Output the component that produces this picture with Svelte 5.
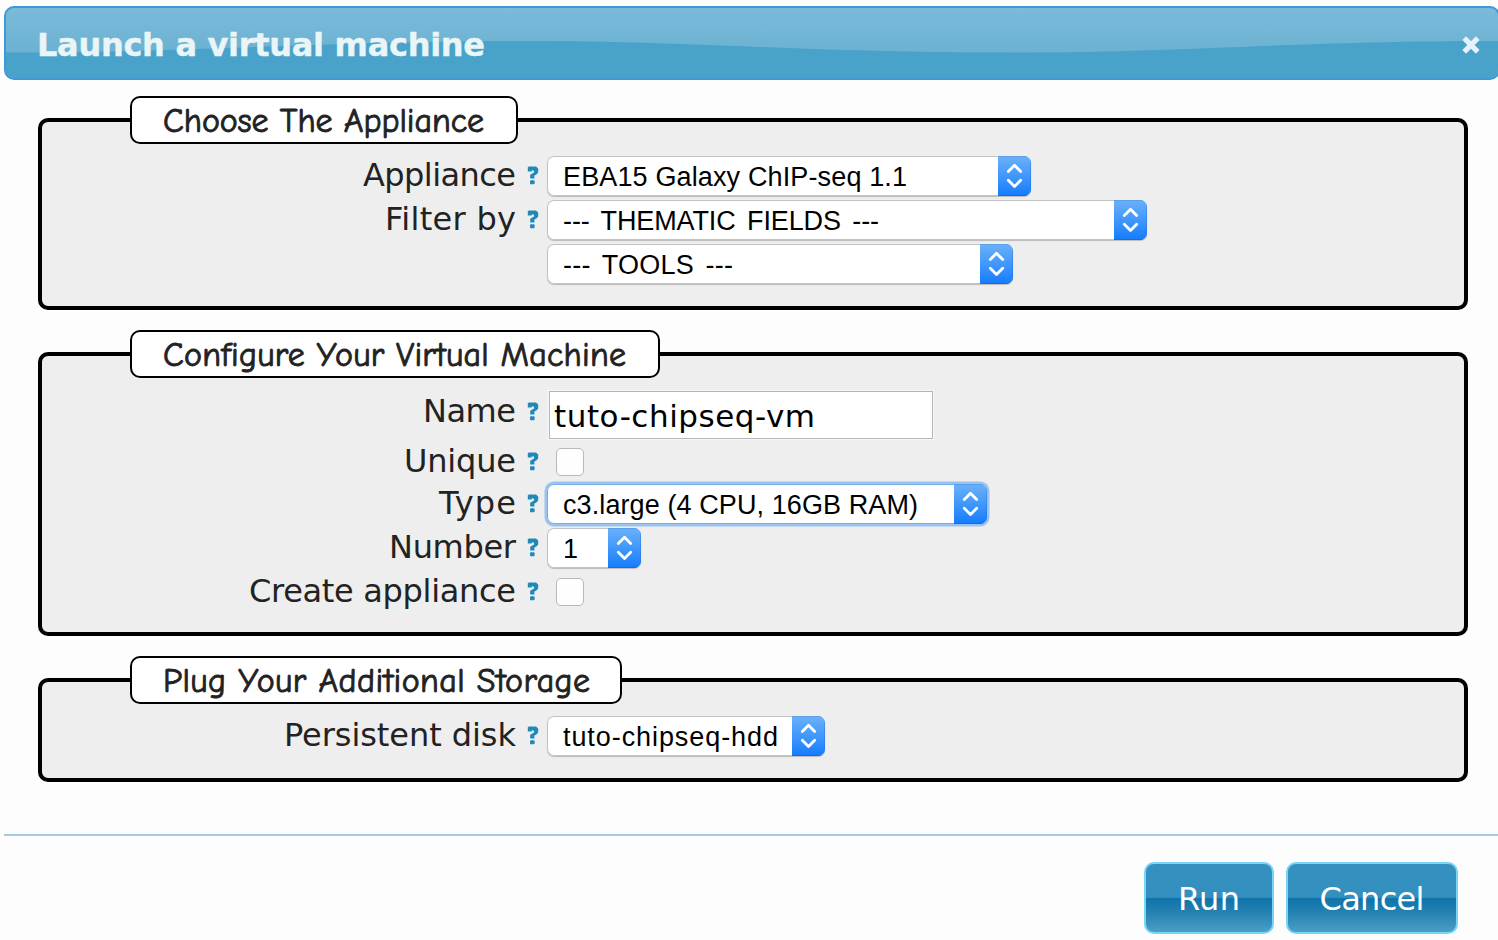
<script>
  // Spreads the letters of a node so that the text takes the given width.
  function fit(node, width) {
    const count = node.textContent.length;
    const natural = node.getBoundingClientRect().width;
    const gap = (width - natural) / (count - 1);
    node.style.letterSpacing = gap + 'px';
    node.style.marginRight = -gap + 'px';
  }

  const groups = [
    {
      title: 'Choose The Appliance', titleWidth: 321, width: 388, height: 192,
      rows: [
        { label: 'Appliance', labelWidth: 153, kind: 'select', value: 'EBA15 Galaxy ChIP-seq 1.1', textWidth: 344, width: 484 },
        { label: 'Filter by', labelWidth: 131, kind: 'select', value: '--- THEMATIC FIELDS ---', textWidth: 316, width: 600, placeholder: true },
        { kind: 'select', value: '--- TOOLS ---', textWidth: 170, width: 466, placeholder: true }
      ]
    },
    {
      title: 'Configure Your Virtual Machine', titleWidth: 463, width: 530, height: 284,
      rows: [
        { label: 'Name', labelWidth: 93, kind: 'input', value: 'tuto-chipseq-vm', textWidth: 261, tall: 50 },
        { label: 'Unique', labelWidth: 112, kind: 'check', tall: 42 },
        { label: 'Type', labelWidth: 77, kind: 'select', value: 'c3.large (4 CPU, 16GB RAM)', textWidth: 355, width: 440, focus: true },
        { label: 'Number', labelWidth: 127, kind: 'select', value: '1', width: 94 },
        { label: 'Create appliance', labelWidth: 267, kind: 'check' }
      ]
    },
    {
      title: 'Plug Your Additional Storage', titleWidth: 427, width: 492, height: 104,
      rows: [
        { label: 'Persistent disk', labelWidth: 232, kind: 'select', value: 'tuto-chipseq-hdd', textWidth: 215, width: 278 }
      ]
    }
  ];
</script>

<div class="dialog">
  <header>
    <svg class="wave" viewBox="0 0 1498 70" preserveAspectRatio="none">
      <path d="M0 44.5 C190 44.5 320 33 520 33 C700 33 790 44.5 1010 44.5 C1190 44.5 1290 33 1498 33 V70 H0Z" />
    </svg>
    <h1><span use:fit={448}>Launch a virtual machine</span></h1>
    <svg class="close" width="20" height="20" viewBox="0 0 20 20"><path d="M3.2 3.2 16.8 16.8M16.8 3.2 3.2 16.8" /></svg>
  </header>

  <main>
    {#each groups as group}
      <section style="height: {group.height}px">
        <h2 style="width: {group.width}px"><span use:fit={group.titleWidth}>{group.title}</span></h2>
        <div class="rows">
          {#each group.rows as row}
            <div class="row" style="height: {row.tall ?? 44}px">
              <div class="label">
                {#if row.label}<span use:fit={row.labelWidth}>{row.label}</span>{/if}
              </div>
              <div class="help">
                {#if row.label}
                  <svg width="12" height="19" viewBox="0 0 12 19">
                    <path d="M.8 1.3 2 .5H9L11.2 2.6V6.6L9.4 8.4 7.4 9.6V12.6H3.2V8.8L7 6.6V4.6H4.6V5.6H.8Z" />
                    <rect x="3" y="14.2" width="4.6" height="4" rx="1" />
                  </svg>
                {/if}
              </div>
              {#if row.kind === 'select'}
                <div class="select" class:focus={row.focus} style="width: {row.width}px">
                  <div class="value" class:placeholder={row.placeholder}>
                    {#if row.textWidth}<span use:fit={row.textWidth}>{row.value}</span>{:else}<span>{row.value}</span>{/if}
                  </div>
                  <div class="arrows">
                    <svg width="33" height="40" viewBox="0 0 33 40"><path d="M10.3 15.5 16.5 9.3 22.7 15.5M10.3 24.3 16.5 30.5 22.7 24.3" /></svg>
                  </div>
                </div>
              {:else if row.kind === 'input'}
                <div class="input"><span use:fit={row.textWidth}>{row.value}</span></div>
              {:else}
                <div class="check"></div>
              {/if}
            </div>
          {/each}
        </div>
      </section>
    {/each}
  </main>

  <footer>
    <button class="run"><span use:fit={62}>Run</span></button>
    <button class="cancel"><span use:fit={105}>Cancel</span></button>
  </footer>
</div>

<style>
  :global(body) { margin: 0; background: #fdfdfd; overflow: hidden; }
  * { box-sizing: border-box; }
  span { white-space: pre; display: inline-block; }
  .dialog {
    width: 1498px; height: 940px; padding: 6px 0 0 4px;
    font-family: Verdana, "DejaVu Sans", sans-serif; color: #222;
    background: #fdfdfd; overflow: hidden;
  }
  header {
    position: relative; width: 1496px; height: 74px;
    display: flex; align-items: center; justify-content: space-between;
    padding: 0 17px 0 30px; border: 2px solid #4297d7; border-radius: 10px;
    background: linear-gradient(#7abada, #6db2d2 60%); overflow: hidden;
  }
  .wave { position: absolute; left: 0; top: 0; width: 100%; height: 100%; fill: #48a2ca; }
  h1 { position: relative; margin: 3px 0 0 1px; font-size: 32px; line-height: 40px; font-weight: bold; color: #eaf5f7; -webkit-text-stroke: 0.4px #eaf5f7; }
  .close { position: relative; top: 2px; fill: none; stroke: #e6f1fb; stroke-width: 5.2; }
  main { display: flex; flex-direction: column; gap: 42px; padding: 38px 0 0 34px; }
  section { width: 1430px; border: 4px solid #000; border-radius: 10px; background: #eee; }
  h2 {
    margin: -26px 0 0 88px; height: 48px; padding-left: 31px;
    border: 2px solid #000; border-radius: 10px; background: #fff;
    font: 400 34px/47px "Comic Sans MS", "Comic Neue", "Open Sans", sans-serif;
    -webkit-text-stroke: 0.9px #222;
  }
  .rows { padding-top: 10px; }
  section:nth-child(2) .rows { padding-top: 12px; }
  .row { display: grid; grid-template-columns: 474px 12px auto; column-gap: 11px; align-items: start; justify-content: start; }
  .label { text-align: right; font-size: 32px; line-height: 42px; }
  .help { padding-top: 12px; height: 31px; }
  .help svg { display: block; fill: #2189b8; }
  .select {
    display: flex; height: 40px; margin: 2px 0 0 -3px; border-radius: 7px; background: #fff;
    box-shadow: inset 0 0 0 1px #c3c3c3, 0 1px 1px rgba(0, 0, 0, .22); overflow: hidden;
  }
  .focus { box-shadow: inset 0 0 0 1px #74aeea, 0 0 0 2.5px #98c2ef; }
  .value { flex: 1; padding-left: 16px; font: 27px/42px Helvetica, "Liberation Sans", sans-serif; color: #000; }
  .placeholder { word-spacing: 4px; }
  .arrows { width: 33px; background: linear-gradient(#6bb1f9, #3c95fb 55%, #147bfd); box-shadow: inset 0 -1px #1b6ade, inset -1px 0 rgba(30, 100, 210, .3), inset 0 1px #5c9fe6; }
  .arrows svg { display: block; fill: none; stroke: #fff; stroke-width: 2.8; stroke-linecap: round; stroke-linejoin: round; }
  .input {
    width: 384px; height: 48px; margin: 1px 0 0 -1px; padding-left: 4px;
    border: 1px solid #b5b5b5; background: #fff; color: #000; font-size: 31px; line-height: 49px;
    box-shadow: 0 0 0 1px #f8f8f8;
  }
  .check { width: 28px; height: 28px; margin: 8px 0 0 6px; border: 1px solid #b9b9b9; border-radius: 5px; background: linear-gradient(#fff, #fdfdfd); }
  footer { display: flex; justify-content: flex-end; gap: 12px; margin-top: 52px; padding: 26px 40px 0 0; border-top: 2px solid #a6c9e2; }
  button {
    height: 72px; padding: 1px 0 0; border: 2px solid #77d5f7; border-radius: 10px; color: #fff;
    background: linear-gradient(#3590bf, #3390be 49%, #0e73aa 51%, #2782b2 72%, #4b9fc6);
    font: 32px/40px Verdana, "DejaVu Sans", sans-serif;
  }
  .run { width: 130px; }
  .cancel { width: 172px; }
</style>
